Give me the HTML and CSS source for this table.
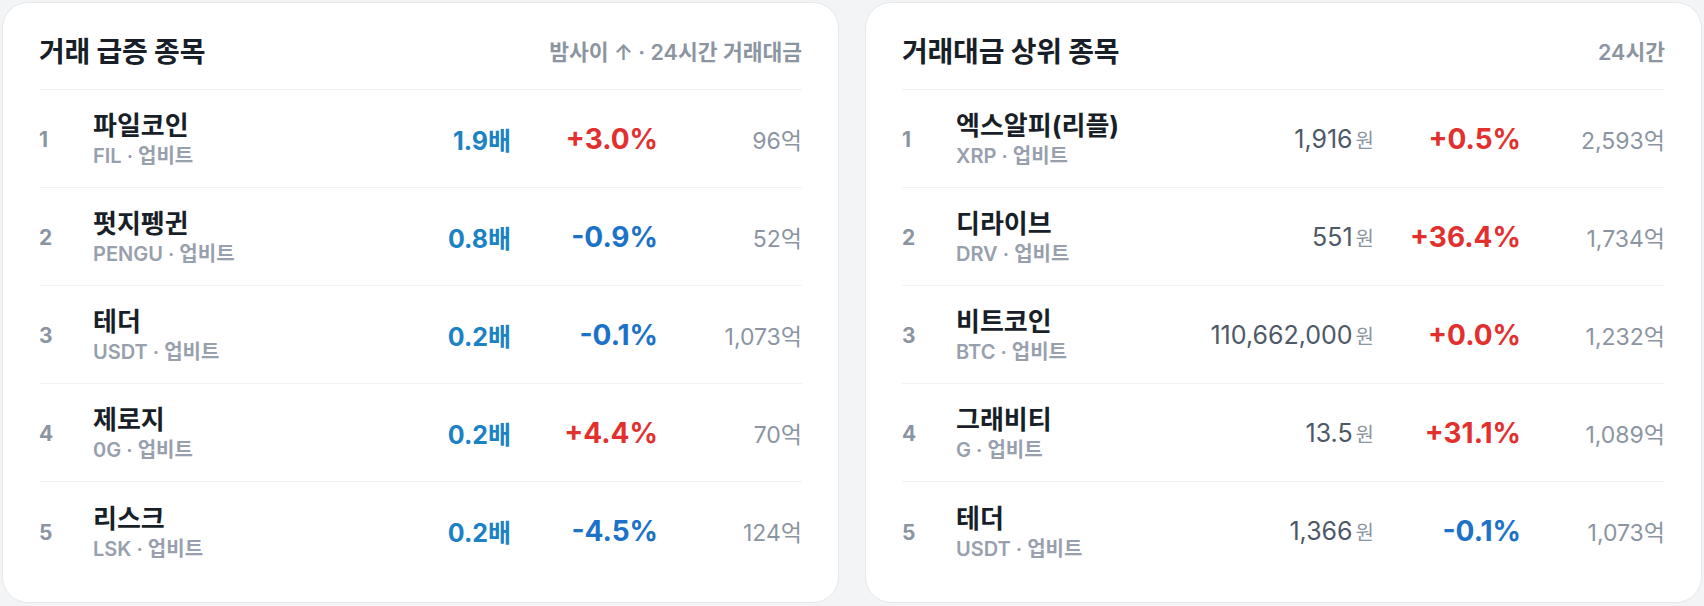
FILE: index.html
```html
<!DOCTYPE html>
<html lang="ko">
<head>
<meta charset="utf-8">
<link rel="stylesheet" href="styles.css">
</head>
<body>
<div class="page">
  <section class="card">
    <header class="card-head">
      <h2 class="card-title">거래 급증 종목</h2>
      <span class="card-meta">밤사이 ↑ · 24시간 거래대금</span>
    </header>
    <div class="rows">
      <div class="row"><span class="rank">1</span><div class="coin"><span class="name">파일코인</span><span class="sub">FIL · 업비트</span></div><span class="mult">1.9배</span><span class="chg up">+3.0%</span><span class="vol">96억</span></div>
      <div class="row"><span class="rank">2</span><div class="coin"><span class="name">펏지펭귄</span><span class="sub">PENGU · 업비트</span></div><span class="mult">0.8배</span><span class="chg down">-0.9%</span><span class="vol">52억</span></div>
      <div class="row"><span class="rank">3</span><div class="coin"><span class="name">테더</span><span class="sub">USDT · 업비트</span></div><span class="mult">0.2배</span><span class="chg down">-0.1%</span><span class="vol">1,073억</span></div>
      <div class="row"><span class="rank">4</span><div class="coin"><span class="name">제로지</span><span class="sub">0G · 업비트</span></div><span class="mult">0.2배</span><span class="chg up">+4.4%</span><span class="vol">70억</span></div>
      <div class="row"><span class="rank">5</span><div class="coin"><span class="name">리스크</span><span class="sub">LSK · 업비트</span></div><span class="mult">0.2배</span><span class="chg down">-4.5%</span><span class="vol">124억</span></div>
    </div>
  </section>
  <section class="card">
    <header class="card-head">
      <h2 class="card-title">거래대금 상위 종목</h2>
      <span class="card-meta">24시간</span>
    </header>
    <div class="rows">
      <div class="row"><span class="rank">1</span><div class="coin"><span class="name">엑스알피(리플)</span><span class="sub">XRP · 업비트</span></div><span class="price">1,916<small>원</small></span><span class="chg up">+0.5%</span><span class="vol">2,593억</span></div>
      <div class="row"><span class="rank">2</span><div class="coin"><span class="name">디라이브</span><span class="sub">DRV · 업비트</span></div><span class="price">551<small>원</small></span><span class="chg up">+36.4%</span><span class="vol">1,734억</span></div>
      <div class="row"><span class="rank">3</span><div class="coin"><span class="name">비트코인</span><span class="sub">BTC · 업비트</span></div><span class="price">110,662,000<small>원</small></span><span class="chg up">+0.0%</span><span class="vol">1,232억</span></div>
      <div class="row"><span class="rank">4</span><div class="coin"><span class="name">그래비티</span><span class="sub">G · 업비트</span></div><span class="price">13.5<small>원</small></span><span class="chg up">+31.1%</span><span class="vol">1,089억</span></div>
      <div class="row"><span class="rank">5</span><div class="coin"><span class="name">테더</span><span class="sub">USDT · 업비트</span></div><span class="price">1,366<small>원</small></span><span class="chg down">-0.1%</span><span class="vol">1,073억</span></div>
    </div>
  </section>
</div>
</body>
</html>
```

FILE: styles.css
```css
* { box-sizing: border-box; }
html, body { margin: 0; padding: 0; }
body {
  background: #f2f4f6;
  font-family: "Inter", "Noto Sans CJK KR", sans-serif;
  color: #191f28;
}
.page {
  display: grid;
  grid-template-columns: 1fr 1fr;
  gap: 26px;
  padding: 2px 2px 3px 2px;
  height: 606px;
}
.card {
  background: #fff;
  border: 1px solid #e5e8eb;
  border-radius: 26px;
  padding: 26px 36px 22px 36px;
  display: flex;
  flex-direction: column;
}
.card-head {
  display: flex;
  justify-content: space-between;
  align-items: center;
  height: 61px;
  border-bottom: 1px solid #f0f2f4;
  padding-bottom: 18px;
}
.card-title {
  margin: 0;
  font-size: 28px;
  font-weight: 700;
  letter-spacing: -0.2px;
  color: #191f28;
}
.card-meta {
  font-size: 21.5px;
  font-weight: 600;
  color: #8b95a1;
}
.row {
  display: grid;
  grid-template-columns: 54px 1fr auto 147px 144px;
  align-items: center;
  height: 98px;
  border-bottom: 1px solid #f0f2f4;
}
.row:last-child { border-bottom: none; }
.rank {
  font-size: 21px;
  font-weight: 700;
  color: #8b95a1;
  padding-top: 2px;
}
.coin {
  display: flex;
  flex-direction: column;
  gap: 3px;
  padding-top: 1px;
}
.name {
  font-size: 26px;
  font-weight: 700;
  color: #191f28;
  line-height: 31px;
}
.sub {
  font-size: 20px;
  font-weight: 600;
  color: #97a0ac;
  line-height: 24px;
}
.mult {
  text-align: right;
  font-size: 25px;
  font-weight: 700;
  color: #1b82c4;
}
.price {
  text-align: right;
  font-size: 25px;
  font-weight: 400;
  color: #4e5968;
}
.price small {
  font-size: 20px;
  color: #8b95a1;
  margin-left: 3px;
}
.chg {
  text-align: right;
  font-size: 28px;
  font-weight: 700;
}
.chg.up { color: #e2302f; }
.chg.down { color: #1c72c6; }
.vol {
  text-align: right;
  font-size: 23px;
  font-weight: 400;
  color: #8b95a1;
}
```
